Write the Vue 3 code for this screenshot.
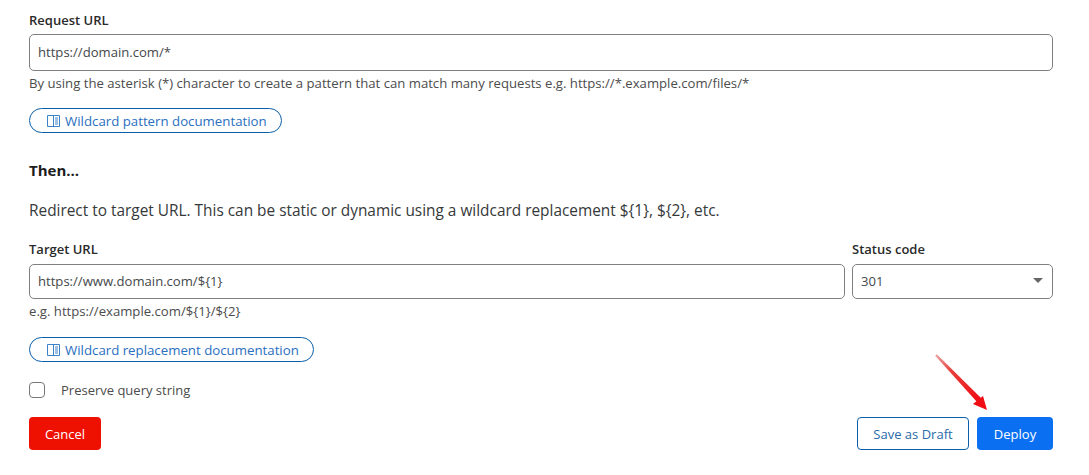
<template>
  <div class="page">
    <label class="field-label">Request URL</label>
    <div class="input">https://domain.com/*</div>
    <p class="hint">By using the asterisk (*) character to create a pattern that can match many requests e.g. https://*.example.com/files/*</p>
    <a class="doc-link">
      <svg class="book" viewBox="0 0 14 12" width="14" height="12"><path d="M1.5.5h12v11h-12M1.5.5v11M7.5.5v11M9 3h3M9 5h3M9 7h3M9 9h3" /></svg>
      Wildcard pattern documentation
    </a>

    <h3 class="then">Then...</h3>
    <p class="desc">Redirect to target URL. This can be static or dynamic using a wildcard replacement ${1}, ${2}, etc.</p>

    <div class="target-row">
      <div class="target-col">
        <label class="field-label">Target URL</label>
        <div class="input short">https://www.domain.com/${1}</div>
      </div>
      <div class="status-col">
        <label class="field-label">Status code</label>
        <div class="input short select">
          301
          <span class="caret"></span>
        </div>
      </div>
    </div>
    <p class="hint">e.g. https://example.com/${1}/${2}</p>
    <a class="doc-link second">
      <svg class="book" viewBox="0 0 14 12" width="14" height="12"><path d="M1.5.5h12v11h-12M1.5.5v11M7.5.5v11M9 3h3M9 5h3M9 7h3M9 9h3" /></svg>
      Wildcard replacement documentation
    </a>

    <label class="check">
      <span class="box"></span>
      Preserve query string
    </label>

    <div class="actions">
      <button class="btn cancel">Cancel</button>
      <div class="right">
        <button class="btn draft">Save as Draft</button>
        <button class="btn deploy">Deploy</button>
      </div>
    </div>

    <svg class="arrow" viewBox="0 0 64 64" width="64" height="64">
      <defs>
        <linearGradient id="shaft" x1="6" y1="5" x2="50" y2="50" gradientUnits="userSpaceOnUse">
          <stop offset="0" stop-color="#e9a3a0" />
          <stop offset="0.35" stop-color="#e8403c" />
          <stop offset="1" stop-color="#f00d14" />
        </linearGradient>
      </defs>
      <path d="M5.2 5.8 L6.8 4.2 L51 48 L47 52 Z" fill="url(#shaft)" />
      <path d="M43 54 L53 46 L57 60 Z" fill="#f00d14" />
    </svg>
  </div>
</template>

<script setup>
</script>

<style>
body {
  margin: 0;
  background: #fff;
}
</style>

<style scoped>
.page {
  position: relative;
  box-sizing: border-box;
  width: 1089px;
  height: 475px;
  padding: 12px 36px 0 29px;
  font-family: "Open Sans", "Noto Sans", sans-serif;
  font-size: 13px;
  color: #36393a;
  overflow: hidden;
}

.field-label {
  display: block;
  height: 22px;
  font-size: 13px;
  line-height: 17px;
  font-weight: 600;
  color: #2a2a2a;
}

.input {
  box-sizing: border-box;
  height: 37px;
  padding: 0 8px;
  border: 1px solid #7f7f7f;
  border-radius: 5px;
  line-height: 35px;
  font-size: 13.1px;
  color: #44484a;
}

.input.short {
  height: 35px;
  line-height: 33px;
}

.hint {
  margin: 3px 0 0;
  height: 18px;
  font-size: 13.15px;
  line-height: 18px;
  color: #4c4c4c;
}

.doc-link {
  display: flex;
  align-items: center;
  box-sizing: border-box;
  gap: 5px;
  width: fit-content;
  height: 25px;
  margin-top: 16px;
  padding: 0 14px 0 16px;
  border: 1px solid #0a5fa8;
  border-radius: 13px;
  font-size: 13.25px;
  color: #2a6fbf;
}

.doc-link.second {
  margin-top: 17px;
}

.book {
  flex: none;
  fill: none;
  stroke: #3c82c8;
  stroke-width: 1;
}

.then {
  margin: 27px 0 0;
  font-size: 15px;
  line-height: 20px;
  font-weight: 700;
  color: #1d1d1d;
}

.desc {
  margin: 21px 0 0;
  font-size: 15.4px;
  line-height: 20px;
  color: #36393a;
}

.target-row {
  display: flex;
  gap: 7px;
  margin-top: 20px;
}

.target-col {
  width: 816px;
}

.target-row .field-label {
  height: 22px;
  margin-bottom: 1px;
}

.status-col {
  flex: 1;
}

.select {
  position: relative;
}

.caret {
  position: absolute;
  right: 9px;
  top: 13px;
  border-left: 5px solid transparent;
  border-right: 5px solid transparent;
  border-top: 5px solid #666;
}

.check {
  display: flex;
  align-items: center;
  gap: 16px;
  margin-top: 20px;
  height: 16px;
  font-size: 13px;
  color: #4c4c4c;
}

.box {
  box-sizing: border-box;
  width: 16px;
  height: 16px;
  border: 1px solid #777;
  border-radius: 4px;
}

.actions {
  display: flex;
  justify-content: space-between;
  margin-top: 19px;
}

.right {
  display: flex;
  gap: 8px;
}

.btn {
  height: 33px;
  border-radius: 4px;
  border: 1px solid transparent;
  font-family: inherit;
  font-size: 13px;
  padding: 0;
}

.cancel {
  width: 72px;
  background: #ee1000;
  color: #fff;
}

.draft {
  width: 112px;
  background: #fff;
  border-color: #0a5fa8;
  color: #2a6aa8;
}

.deploy {
  width: 76px;
  background: #0a6ff0;
  color: #fff;
}

.arrow {
  position: absolute;
  left: 930px;
  top: 350px;
}
</style>
